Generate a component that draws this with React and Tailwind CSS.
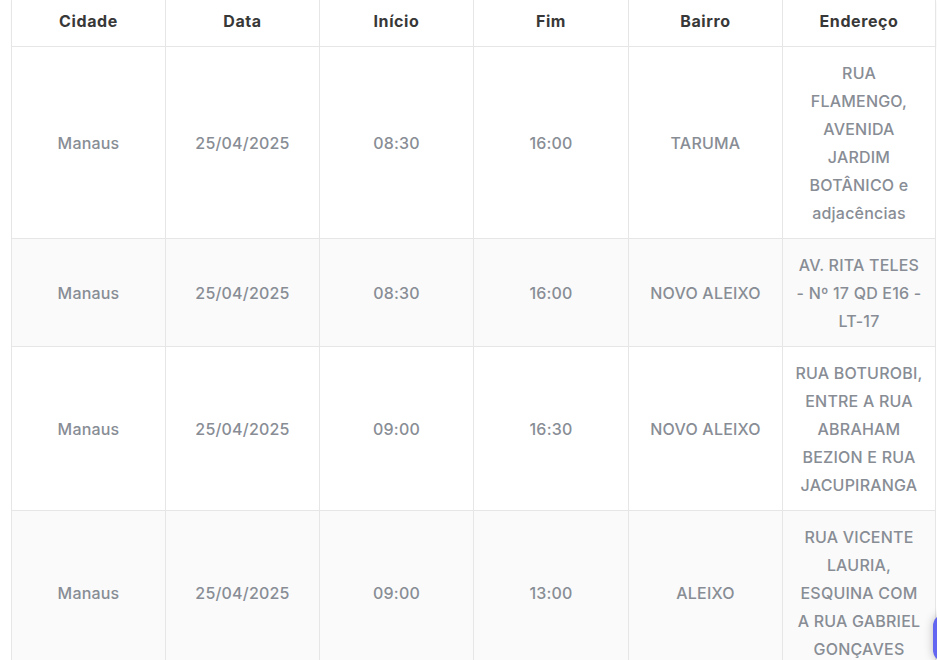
import React from 'react';

const rows = [
  { cidade: 'Manaus', data: '25/04/2025', inicio: '08:30', fim: '16:00', bairro: 'TARUMA', endereco: 'RUA FLAMENGO, AVENIDA JARDIM BOTÂNICO e adjacências' },
  {
    cidade: 'Manaus', data: '25/04/2025', inicio: '08:30', fim: '16:00', bairro: 'NOVO ALEIXO',
    endereco: <>AV. RITA TELES <span className="whitespace-nowrap">- Nº</span> 17 QD E16 - LT-17</>,
  },
  { cidade: 'Manaus', data: '25/04/2025', inicio: '09:00', fim: '16:30', bairro: 'NOVO ALEIXO', endereco: 'RUA BOTUROBI, ENTRE A RUA ABRAHAM BEZION E RUA JACUPIRANGA' },
  { cidade: 'Manaus', data: '25/04/2025', inicio: '09:00', fim: '13:00', bairro: 'ALEIXO', endereco: 'RUA VICENTE LAURIA, ESQUINA COM A RUA GABRIEL GONÇAVES' },
];

const headers = ['Cidade', 'Data', 'Início', 'Fim', 'Bairro', 'Endereço'];

export default function App() {
  return (
    <div className="relative h-[660px] overflow-hidden bg-white pl-[11px] font-['Inter',sans-serif]">
      <table className="w-[924px] table-fixed border-collapse text-center">
        <colgroup>
          <col className="w-[154px]" />
          <col className="w-[154px]" />
          <col className="w-[154px]" />
          <col className="w-[155px]" />
          <col className="w-[154px]" />
          <col className="w-[153px]" />
        </colgroup>
        <thead>
          <tr className="h-[46px] shadow-[0_2px_3px_rgba(0,0,0,0.06)]">
            {headers.map(h => (
              <th key={h} className="border-x border-[#e6e6e6] px-3 pb-[4px] text-[16px] font-bold tracking-[0.6px] text-[#383838]">
                {h}
              </th>
            ))}
          </tr>
        </thead>
        <tbody>
          {rows.map((r, i) => (
            <tr key={i} className={i % 2 === 1 ? 'bg-[#fafafa]' : 'bg-white'}>
              {[r.cidade, r.data, r.inicio, r.fim, r.bairro, r.endereco].map((v, j) => (
                <td key={j} className="border border-[#e6e6e6] px-[10px] pt-[12px] pb-[11px] text-[16px] font-medium leading-[28px] tracking-[0.2px] text-[#888d95]">
                  {v}
                </td>
              ))}
            </tr>
          ))}
        </tbody>
      </table>

      {/* floating widget button, cut off at the edge */}
      <div className="absolute right-[-40px] top-[614px] h-[48px] w-[44px] rounded-xl bg-[#6366f1] shadow-[0_0_10px_rgba(0,0,0,0.25)]"></div>
    </div>
  );
}
